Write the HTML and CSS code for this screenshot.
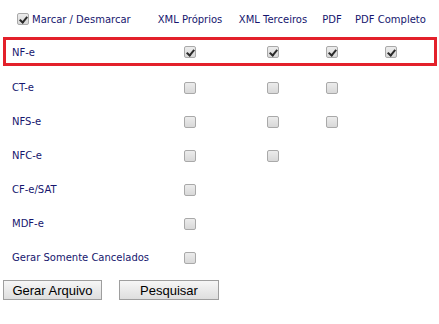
FILE: index.html
```html
<!DOCTYPE html>
<html lang="pt">
<head>
<meta charset="utf-8">
<title>Exportar</title>
<link rel="stylesheet" href="styles.css">
</head>
<body>
<div class="panel">
  <div class="row head">
    <label class="label mark"><input type="checkbox" class="cb" checked> <span>Marcar / Desmarcar</span></label>
    <div class="cell">XML Próprios</div>
    <div class="cell">XML Terceiros</div>
    <div class="cell">PDF</div>
    <div class="cell">PDF Completo</div>
  </div>
  <div class="row item selected">
    <div class="label">NF-e</div>
    <div class="cell"><input type="checkbox" class="cb" checked></div>
    <div class="cell"><input type="checkbox" class="cb" checked></div>
    <div class="cell"><input type="checkbox" class="cb" checked></div>
    <div class="cell"><input type="checkbox" class="cb" checked></div>
  </div>
  <div class="row item">
    <div class="label">CT-e</div>
    <div class="cell"><input type="checkbox" class="cb"></div>
    <div class="cell"><input type="checkbox" class="cb"></div>
    <div class="cell"><input type="checkbox" class="cb"></div>
    <div class="cell"></div>
  </div>
  <div class="row item">
    <div class="label">NFS-e</div>
    <div class="cell"><input type="checkbox" class="cb"></div>
    <div class="cell"><input type="checkbox" class="cb"></div>
    <div class="cell"><input type="checkbox" class="cb"></div>
    <div class="cell"></div>
  </div>
  <div class="row item">
    <div class="label">NFC-e</div>
    <div class="cell"><input type="checkbox" class="cb"></div>
    <div class="cell"><input type="checkbox" class="cb"></div>
    <div class="cell"></div>
    <div class="cell"></div>
  </div>
  <div class="row item">
    <div class="label">CF-e/SAT</div>
    <div class="cell"><input type="checkbox" class="cb"></div>
    <div class="cell"></div>
    <div class="cell"></div>
    <div class="cell"></div>
  </div>
  <div class="row item">
    <div class="label">MDF-e</div>
    <div class="cell"><input type="checkbox" class="cb"></div>
    <div class="cell"></div>
    <div class="cell"></div>
    <div class="cell"></div>
  </div>
  <div class="row item">
    <div class="label">Gerar Somente Cancelados</div>
    <div class="cell"><input type="checkbox" class="cb"></div>
    <div class="cell"></div>
    <div class="cell"></div>
    <div class="cell"></div>
  </div>
  <div class="actions">
    <button class="btn btn-gerar" type="button">Gerar Arquivo</button>
    <button class="btn btn-pesq" type="button">Pesquisar</button>
  </div>
</div>
</body>
</html>
```

FILE: styles.css
```css
html, body {
  margin: 0;
  padding: 0;
  background: #ffffff;
}

.panel {
  width: 434px;
  margin-left: 3px;
  font-family: "DejaVu Sans", Verdana, sans-serif;
  font-size: 10px;
  color: #16166e;
}

.row {
  display: grid;
  grid-template-columns: 145px 78px 88px 30px 87px;
  align-items: center;
  border: 3px solid transparent;
}

.head {
  height: 29px;
  padding-top: 2px;
}

.item {
  height: 27px;
  padding-top: 1px;
}

.selected {
  border-color: #e3202a;
  height: 22px;
  margin-bottom: 4px;
}

.label {
  padding-left: 6px;
  white-space: nowrap;
}

.mark {
  display: flex;
  align-items: center;
  padding-left: 11px;
  gap: 3px;
}

.mark .cb {
  margin-top: -1px;
}

.cell {
  display: flex;
  justify-content: center;
  align-items: center;
  white-space: nowrap;
}

.cb {
  -webkit-appearance: none;
  appearance: none;
  position: relative;
  width: 12px;
  height: 12px;
  margin: 0;
  border: 1px solid #a9a9a9;
  border-radius: 2px;
  background: linear-gradient(#ececec, #d8d8d8);
  box-sizing: border-box;
}

.cb:checked::after {
  content: "";
  position: absolute;
  left: 3px;
  top: 1px;
  width: 3px;
  height: 6px;
  border-right: 2px solid #2b2b2b;
  border-bottom: 2px solid #2b2b2b;
  transform: rotate(40deg);
}

.actions {
  display: flex;
  gap: 17px;
  margin-top: 6px;
}

.btn {
  height: 20px;
  padding: 0;
  border: 1px solid #9e9e9e;
  border-radius: 0;
  background: linear-gradient(#f6f6f6, #dedede);
  font-family: "Liberation Sans", Arial, sans-serif;
  font-size: 13px;
  color: #000;
}

.btn-gerar { width: 99px; }
.btn-pesq { width: 100px; }
```
